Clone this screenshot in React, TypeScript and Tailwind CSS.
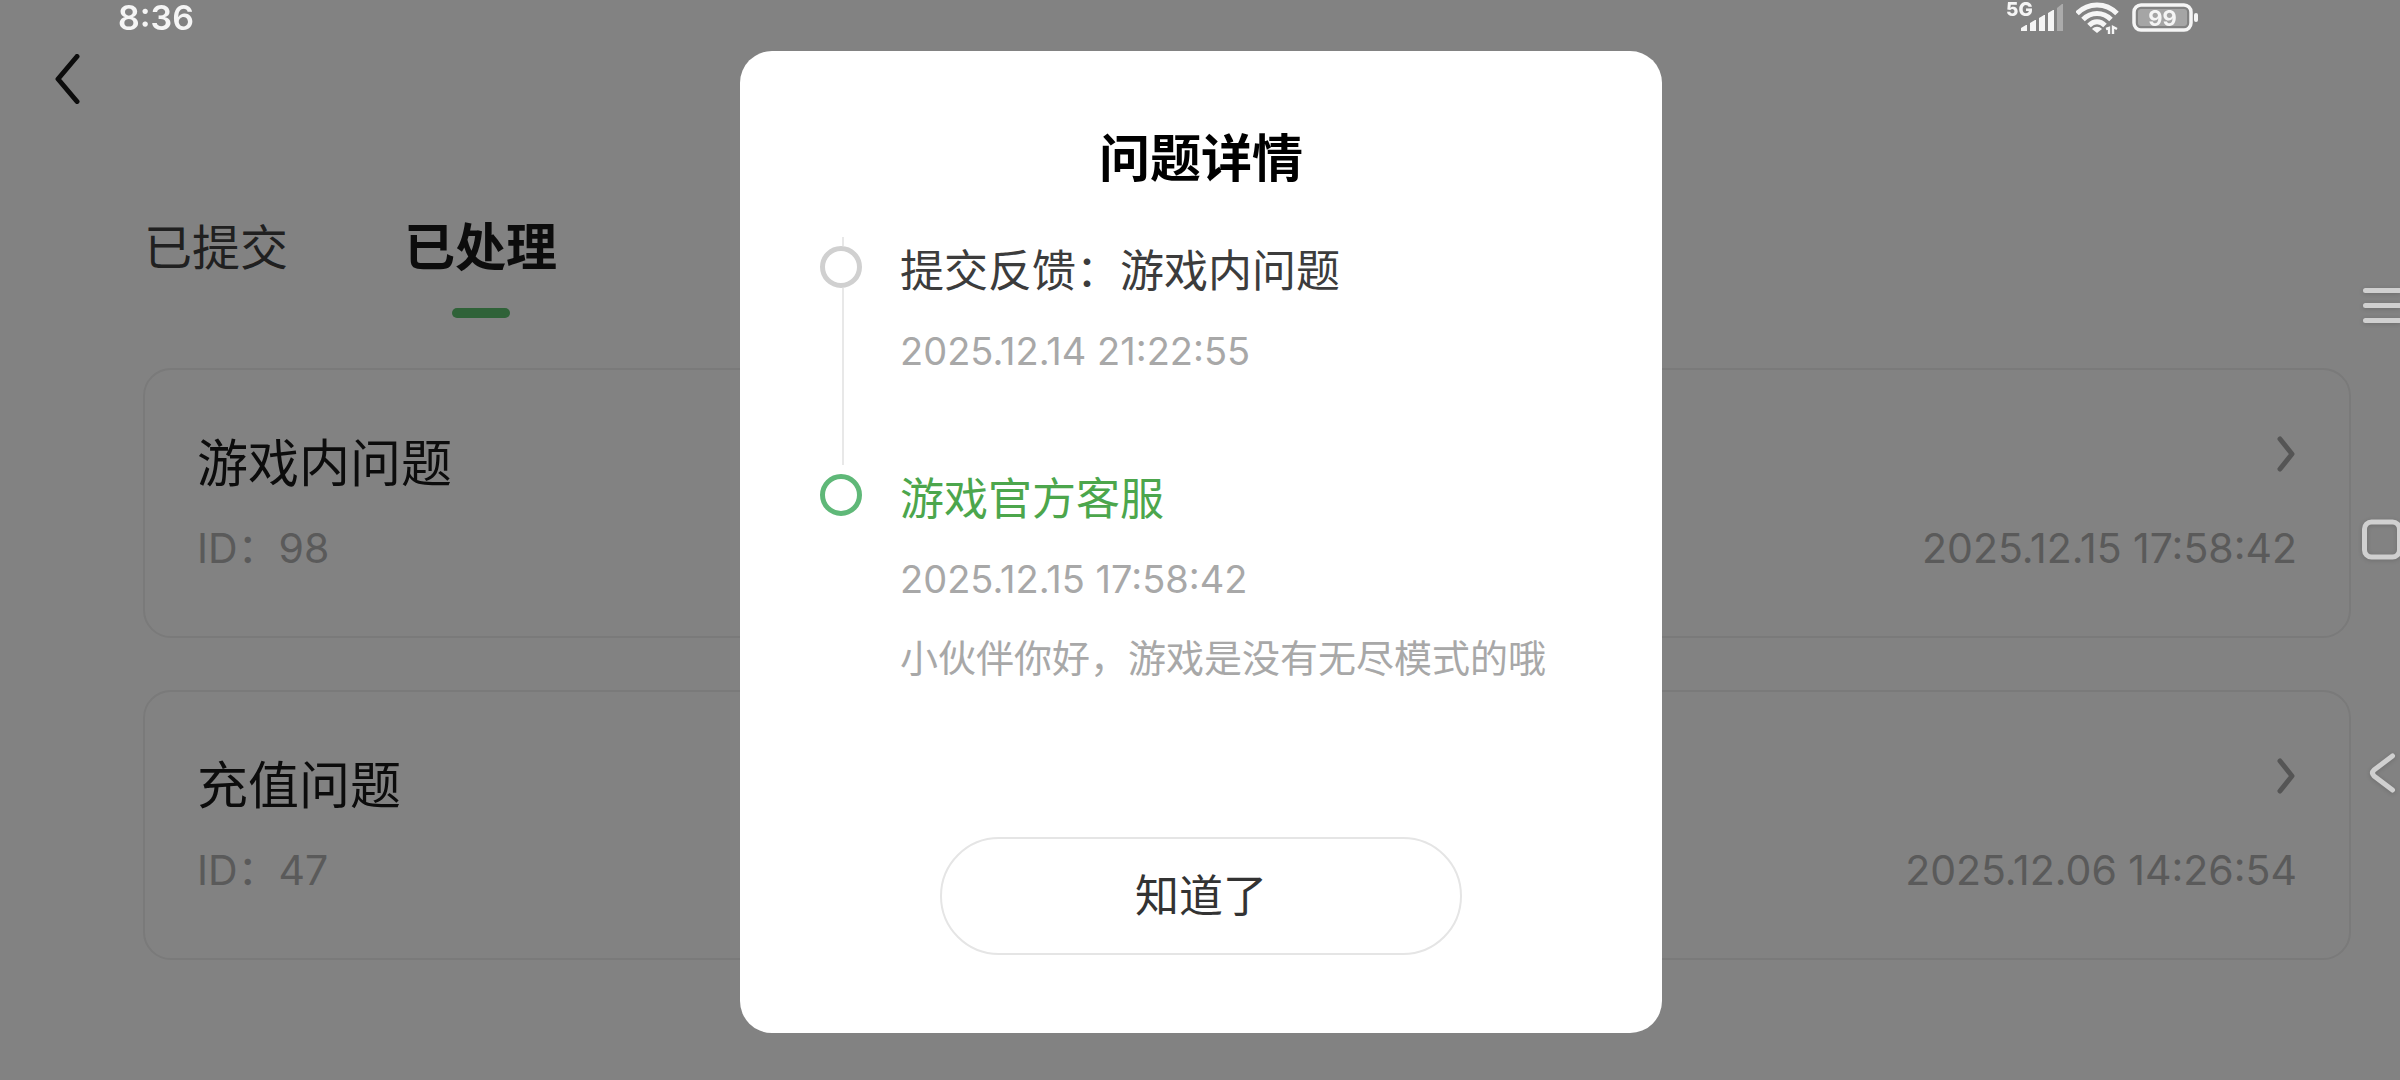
import React, { useState } from 'react';

interface Ticket {
  id: number;
  title: string;
  time: string;
}

interface TimelineEntry {
  title: string;
  time: string;
  message?: string;
  active: boolean;
}

const tickets: Ticket[] = [
  { id: 98, title: '游戏内问题', time: '2025.12.15 17:58:42' },
  { id: 47, title: '充值问题', time: '2025.12.06 14:26:54' },
];

const timeline: TimelineEntry[] = [
  { title: '提交反馈：游戏内问题', time: '2025.12.14 21:22:55', active: false },
  {
    title: '游戏官方客服',
    time: '2025.12.15 17:58:42',
    message: '小伙伴你好，游戏是没有无尽模式的哦',
    active: true,
  },
];

const tabs = ['已提交', '已处理'];

const StatusBar = () => (
  <div className="fixed inset-x-0 top-0 z-20 flex h-9 items-center justify-between pl-[118px] pr-[200px] text-[#f5f5f5]">
    <span className="text-[34px] leading-9 font-semibold">8:36</span>
    <div className="flex h-9 items-start gap-3">
      <div className="relative">
        <span className="absolute top-0 left-0 text-[19px] leading-5 font-extrabold">5G</span>
        <svg width="58" height="36" viewBox="0 0 58 36" fill="currentColor" aria-hidden="true">
          <path d="M15 31v-3l5-3h1v6zM24 31v-8l5-3h1v11zM33 31V18l5-3h1v16zM42 31V13l5-3h1v21z" />
          <path d="M51 31V8l5-4h1v27z" fill="#ababab" />
        </svg>
      </div>
      <svg width="44" height="36" viewBox="0 0 44 36" fill="none" stroke="currentColor" strokeWidth="5" aria-hidden="true">
        <path d="M1 13.500C12 2 30 2 41 13.500" />
        <path d="M7 19.500c8-8 20-8 28 0" />
        <path d="M13 25.500c5-5 11-5 16 0" />
        <path d="M16 29c3-3 7-3 10 0l-5 4z" fill="currentColor" stroke="none" />
        <path d="M30 29l3-1v6M37 34v-7l4 2" strokeWidth="2.4" />
      </svg>
      <div className="relative">
        <svg width="68" height="36" viewBox="0 0 68 36" aria-hidden="true">
          <rect x="2" y="5" width="57" height="25" rx="7" fill="none" stroke="currentColor" strokeWidth="3.5" />
          <rect x="6" y="9" width="49" height="17" rx="3" fill="#a5a5a5" />
          <rect x="62" y="13" width="4" height="9" rx="2" fill="currentColor" />
        </svg>
        <span className="absolute top-0 left-0 w-[61px] text-center text-[22px] leading-9 font-bold">99</span>
      </div>
    </div>
  </div>
);

const SystemNav = () => (
  <nav className="fixed inset-y-0 right-0 z-20 flex flex-col justify-center gap-[186px] text-[#d0d0d0] drop-shadow-sm">
    <button type="button" aria-label="菜单" className="h-12">
      <svg width="38" height="48" viewBox="0 0 38 48" stroke="currentColor" strokeWidth="5" strokeLinecap="round">
        <path d="M3.500 8.500H40M3.500 23.500H40M3.500 38.500H40" />
      </svg>
    </button>
    <button type="button" aria-label="主页" className="h-12">
      <svg width="38" height="48" viewBox="0 0 38 48" fill="none" stroke="currentColor" strokeWidth="5">
        <rect x="2.500" y="6" width="35" height="35" rx="7" />
      </svg>
    </button>
    <button type="button" aria-label="返回" className="h-12">
      <svg width="38" height="48" viewBox="0 0 38 48" fill="none" stroke="currentColor" strokeWidth="5" strokeLinecap="round" strokeLinejoin="round">
        <path d="M30.500 6L12 20q-3 3 0 6L30.500 40" />
      </svg>
    </button>
  </nav>
);

const TicketCard: React.FC<{ ticket: Ticket; onOpen: () => void }> = ({ ticket, onOpen }) => (
  <li>
    <button type="button" onClick={onOpen} className="block w-full rounded-[28px] border-2 border-[#efefef] px-[52px] py-16 text-left">
      <span className="flex items-start justify-between">
        <span className="text-[51px] leading-[60px] text-[#181818]">{ticket.title}</span>
        <svg width="20" height="42" viewBox="0 0 20 42" fill="none" stroke="#a8a8a8" strokeWidth="5" strokeLinecap="round" strokeLinejoin="round" aria-hidden="true">
          <path d="M3 5l12 15L3 35" />
        </svg>
      </span>
      <span className="mt-[30px] flex justify-between text-[41px] leading-[48px] text-[#b0b0b0]">
        <span>ID：{ticket.id}</span>
        <span>{ticket.time}</span>
      </span>
    </button>
  </li>
);

const TimelineItem: React.FC<{ entry: TimelineEntry; last: boolean }> = ({ entry, last }) => (
  <li className="flex gap-[38px]">
    <div className="flex w-[42px] shrink-0 flex-col">
      <span className={`ml-[22px] h-[9px] w-[2px] ${last ? '' : 'bg-[#e8e8e8]'}`} />
      <span className={`size-[42px] rounded-full border-[5px] ${entry.active ? 'border-[#5fb878]' : 'border-[#d0d0d0]'}`} />
      <span className={`ml-[22px] w-[2px] flex-1 ${last ? '' : 'bg-[#e8e8e8]'}`} />
    </div>
    <div className={`pt-1 ${last ? '' : 'pb-[84px]'}`}>
      <h3 className={`text-[44px] leading-[60px] ${entry.active ? 'text-[#4ca64c]' : 'text-[#3c3c3c]'}`}>{entry.title}</h3>
      <p className="mt-5 text-[38px] leading-[60px] text-[#a8a8a8]">{entry.time}</p>
      {entry.message && <p className="mt-6 text-[38px] leading-[50px] text-[#a8a8a8]">{entry.message}</p>}
    </div>
  </li>
);

const DetailDialog: React.FC<{ onClose: () => void }> = ({ onClose }) => (
  <div className="fixed inset-0 z-10 flex items-center justify-center bg-black/49 pt-1 pl-0.5">
    <div role="dialog" aria-modal="true" aria-labelledby="detail-title" className="w-[922px] max-w-full rounded-[32px] bg-white py-[78px]">
      <h2 id="detail-title" className="text-center text-[51px] leading-[60px] font-bold text-black">问题详情</h2>
      <ul className="mt-12 px-20">
        {timeline.map((entry, i) => (
          <TimelineItem key={entry.title} entry={entry} last={i === timeline.length - 1} />
        ))}
      </ul>
      <div className="mt-[154px] flex justify-center">
        <button type="button" onClick={onClose} className="h-[118px] w-[522px] rounded-full border-2 border-[#e5e5e5] text-[44px] text-[#333333]">
          知道了
        </button>
      </div>
    </div>
  </div>
);

const App = () => {
  const [tab, setTab] = useState(1);
  const [open, setOpen] = useState(true);

  return (
    <div className="min-h-screen bg-white font-[Inter,'Noto_Sans_CJK_SC',sans-serif]">
      <StatusBar />
      <main className="pt-[54px] pb-16">
        <header className="pl-[54px]">
          <button type="button" aria-label="返回" className="block">
            <svg width="26" height="50" viewBox="0 0 26 50" fill="none" stroke="#181818" strokeWidth="5" strokeLinecap="round" strokeLinejoin="round">
              <path d="M23 2.500L4 25l19 22.500" />
            </svg>
          </button>
        </header>
        <div role="tablist" className="mt-[114px] flex gap-[116px] pl-[144px]">
          {tabs.map((label, i) => (
            <button
              key={label}
              type="button"
              role="tab"
              aria-selected={tab === i}
              onClick={() => setTab(i)}
              className="flex flex-col items-center gap-[30px]"
            >
              <span className={tab === i ? 'text-[51px] leading-[60px] font-bold text-[#181818]' : 'text-[48px] leading-[60px] text-[#3f3f3f]'}>
                {label}
              </span>
              <span className={`h-[10px] w-[58px] rounded-full ${tab === i ? 'bg-[#5cc06e]' : ''}`} />
            </button>
          ))}
        </div>
        <ul className="mt-[50px] flex flex-col gap-[52px] pr-[49px] pl-[143px]">
          {tickets.map((ticket) => (
            <TicketCard key={ticket.id} ticket={ticket} onOpen={() => setOpen(true)} />
          ))}
        </ul>
      </main>
      {open && <DetailDialog onClose={() => setOpen(false)} />}
      <SystemNav />
    </div>
  );
};

export default App;
